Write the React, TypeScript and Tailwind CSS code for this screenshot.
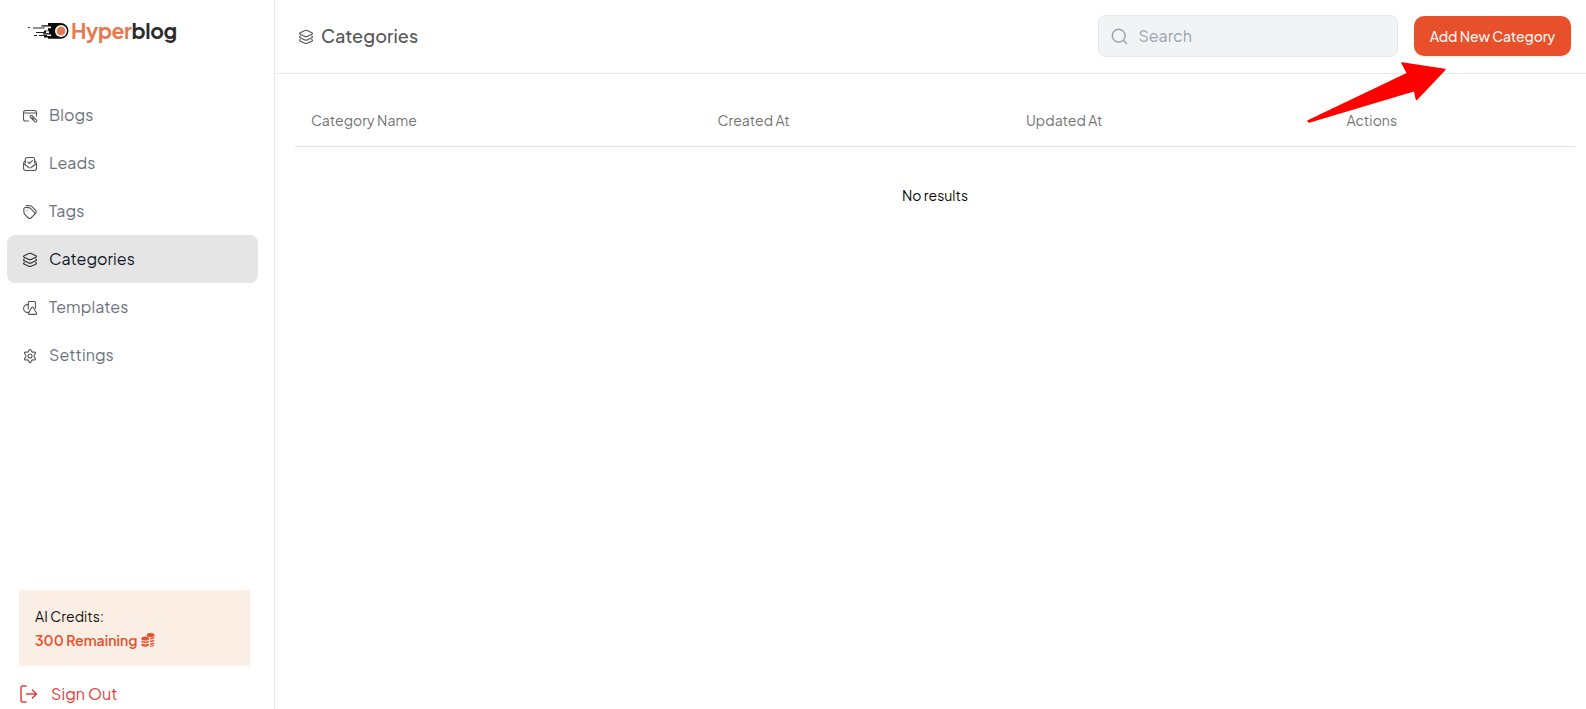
import type { ReactNode } from "react";

function Icon({ children }: { children: ReactNode }) {
  return (
    <svg
      viewBox="0 0 16 16"
      fill="none"
      stroke="currentColor"
      strokeWidth="1.1"
      strokeLinecap="round"
      strokeLinejoin="round"
      className="mt-px size-4 shrink-0"
    >
      {children}
    </svg>
  );
}

const BlogIcon = () => (
  <Icon>
    <path d="M6.5 13H3.600A2.100 2.100 0 0 1 1.500 10.900V4.600A2.100 2.100 0 0 1 3.600 2.500h8.800a2.100 2.100 0 0 1 2.100 2.100V8M1.500 5h13" />
    <path d="M8.200 7.700l2-.1 4.200 4.300a1.200 1.200 0 0 1-1.700 1.700L8.400 9.400zM10.200 9.700l1.600 1.600" />
  </Icon>
);

const LeadIcon = () => (
  <Icon>
    <path d="M3.400 7V3.500a2 2 0 0 1 2-2h5.200a2 2 0 0 1 2 2V7" />
    <path d="M3.400 4.700C2 5.400 1.500 6.500 1.500 8v4a2.500 2.500 0 0 0 2.500 2.500h8a2.500 2.500 0 0 0 2.500-2.500V8c0-1.500-.5-2.600-1.900-3.300M1.600 7.500l4.800 3.800a2.500 2.500 0 0 0 3.200 0l4.800-3.800" />
    <path d="m5.900 6 1.500 1.500L10.400 4.700" />
  </Icon>
);

const TagIcon = () => (
  <Icon>
    <path d="M1.800 5.300 2 8.900a2 2 0 0 0 .6 1.300l3.700 3.800a1.900 1.900 0 0 0 2.700 0l3.200-3.200a1.900 1.900 0 0 0 0-2.700L8.100 4.200a2 2 0 0 0-1.300-.6L3.300 3.500A1.500 1.500 0 0 0 1.800 5.300z" />
    <path d="M4.200 1.600l4.200.2a2 2 0 0 1 1.300.6l4 4a1.900 1.900 0 0 1 0 2.700l-.8.800M5 6.500h.1" />
  </Icon>
);

const LayersIcon = () => (
  <Icon>
    <path d="M6.900 1.500 2.200 3.700c-.9.500-.9 1 0 1.500l4.700 2.200a2.500 2.500 0 0 0 2.200 0l4.700-2.200c.9-.5.9-1 0-1.500L9.100 1.500a2.500 2.500 0 0 0-2.200 0z" />
    <path d="M2.300 7c-1.100.6-1.100 1.200 0 1.700l4.600 2.200a2.500 2.500 0 0 0 2.200 0l4.600-2.200c1.100-.5 1.100-1.100 0-1.700" />
    <path d="M2.300 10.500c-1.100.6-1.100 1.200 0 1.700l4.600 2.100a2.500 2.500 0 0 0 2.200 0l4.600-2.100c1.100-.5 1.100-1.100 0-1.700" />
  </Icon>
);

const TemplateIcon = () => (
  <Icon>
    <path d="M6.300 9V2.500c0-.7.400-1 1-1h5.200c.6 0 1 .4 1 1v5.800" />
    <path d="M6.300 4.600H5.500a3.900 3.900 0 0 0 0 7.800h1.200" />
    <path d="M9.500 7.700 6.600 12.900c-.4.900 0 1.500.8 1.500h6.300c.9 0 1.200-.6.800-1.400L11.400 7.700c-.5-.8-1.400-.8-1.900 0z" />
  </Icon>
);

const SettingsIcon = () => (
  <Icon>
    <circle cx="8" cy="8" r="2" />
    <path d="M6.500 3.200 7.200 1.800c.3-.5 1.300-.5 1.600 0l.7 1.400c.3.600.9.900 1.500.9l1.600-.1c.7 0 1.200.8.800 1.400l-.9 1.300a2.200 2.200 0 0 0 0 2.600l.9 1.300c.4.600-.1 1.400-.8 1.400L11 11.900c-.6 0-1.200.3-1.500.9l-.7 1.400c-.3.500-1.300.5-1.600 0l-.7-1.400c-.3-.6-.9-.9-1.500-.9l-1.600.1c-.7 0-1.200-.8-.8-1.400l.9-1.300a2.200 2.200 0 0 0 0-2.600l-.9-1.300C2.200 4.800 2.700 4 3.400 4L5 4.100c.6 0 1.200-.3 1.500-.9z" />
  </Icon>
);

const CoinsIcon = () => (
  <svg viewBox="0 0 14 14" fill="currentColor" className="size-3.5">
    <ellipse cx="9.600" cy="2" rx="3.900" ry="2" />
    <ellipse cx="4.200" cy="5.500" rx="3.900" ry="2" />
    <path d="M.4 7.700c1.500 1.100 6.100 1.100 7.600 0v1.100c-.7 1.700-6.900 1.700-7.600 0zM.4 10.600c1.500 1.100 6.100 1.100 7.600 0v1.500c-.7 2.200-6.900 2.200-7.600 0zM9.100 4.800c1.500 0 3.100-.3 4.200-1v1.200c-.4.900-2.200 1.300-4.200 1.300zM9.100 7.600c1.500 0 3.100-.3 4.200-1v1.200c-.4.900-2.200 1.300-4.200 1.300zM9.100 10.300c1.500 0 3.100-.3 4.200-1v1.200c-.4.900-2.200 1.300-4.200 1.300zM9.100 12.700c1.500 0 3.100-.3 4.200-1v.8c-.4.900-2.200 1.300-4.200 1.300z" />
  </svg>
);

function Logo() {
  return (
    <div className="flex h-[62px] items-center pl-7">
      <svg viewBox="0 0 42 18" className="h-[18px] w-[42px]">
        <path
          d="M20 1H32.500a7.800 7.800 0 0 1 0 15.800H20v-1.300h-4v-1.500h7v-1.400H15v-1.300h6V10h-5V8.400h4V6.200h3V4.500H13.500V3.200H20z"
          fill="#0b0b0b"
        />
        <path d="M5 6h12M8 10.500h10M6 13.500h3M11 13.500h8M0 5.600h2" stroke="#222" strokeWidth="1" />
        <path d="M16 6.500h4M18 9.300h3" stroke="#fff" strokeWidth="1" />
        <circle cx="33" cy="9" r="6" fill="#fff" />
        <circle cx="33" cy="9" r="4.400" fill="#e57a50" />
      </svg>
      <span className="ml-px text-[21px] leading-[26px] font-bold tracking-[-0.4px] text-[#2b2b2b]">
        <span className="text-[#e57a50]">Hyper</span>blog
      </span>
    </div>
  );
}

const navItems = [
  { label: "Blogs", icon: <BlogIcon /> },
  { label: "Leads", icon: <LeadIcon /> },
  { label: "Tags", icon: <TagIcon /> },
  { label: "Categories", icon: <LayersIcon />, active: true },
  { label: "Templates", icon: <TemplateIcon /> },
  { label: "Settings", icon: <SettingsIcon /> },
];

function Sidebar() {
  return (
    <aside className="flex w-[275px] shrink-0 flex-col border-r border-[#e5e7eb]">
      <Logo />
      <nav className="mt-[29px] flex flex-col pr-4 pl-[7px]">
        {navItems.map((item) => (
          <a
            key={item.label}
            className={
              item.active
                ? "flex h-12 items-center gap-[11px] rounded-lg bg-[#e5e5e5] pl-[15px] text-[#111827]"
                : "flex h-12 items-center gap-[11px] rounded-lg pl-[15px] text-[#6b7280]"
            }
          >
            <span className={item.active ? "text-[#333]" : "text-[#555]"}>{item.icon}</span>
            <span className="text-base tracking-[0.08px]">{item.label}</span>
          </a>
        ))}
      </nav>
      <div className="mt-auto mr-6 ml-[19px] h-[76px] bg-[#fbeee5] px-4 pt-[14px] text-sm leading-6 tracking-[0.05px]">
        <p className="text-[#111]">AI Credits:</p>
        <p className="flex items-center gap-1 font-semibold text-[#e84f2b]">
          300 Remaining <CoinsIcon />
        </p>
      </div>
      <a className="mt-4 mb-[3px] flex h-6 items-center pl-5 text-base tracking-[0.08px] text-[#e53e3e]">
        <svg
          viewBox="0 0 18 18"
          fill="none"
          stroke="currentColor"
          strokeWidth="1.500"
          strokeLinecap="round"
          strokeLinejoin="round"
          className="mr-[13px] size-[18px]"
        >
          <path d="M6 1H3a2 2 0 0 0-2 2v12a2 2 0 0 0 2 2h3M6.500 9h10M12.500 5l4 4-4 4" />
        </svg>
        Sign Out
      </a>
    </aside>
  );
}

function Header() {
  return (
    <header className="flex h-[74px] shrink-0 items-center border-b border-[#e5e7eb] pr-[15px] pb-px pl-[23px]">
      <span className="text-[#555]">
        <LayersIcon />
      </span>
      <h1 className="ml-[7px] text-lg font-medium tracking-[0.08px] text-[#555]">Categories</h1>
      <div className="ml-auto flex h-[42px] w-[300px] items-center rounded-lg border border-[#e5e7eb] bg-[#f2f3f5] pl-[11.500px] text-base text-[#9ca3af]">
        <svg
          viewBox="0 0 17 17"
          fill="none"
          stroke="currentColor"
          strokeWidth="1.500"
          strokeLinecap="round"
          className="mr-[11px] size-[17px]"
        >
          <circle cx="7.700" cy="7.700" r="6.400" />
          <path d="m12.500 12.500 3 3" />
        </svg>
        Search
      </div>
      <button className="ml-4 h-10 w-[157px] rounded-[10px] bg-[#e84f2b] text-sm font-medium tracking-[-0.08px] text-[#fff5ee] shadow-[0_1px_2px_#fbe9df]">
        Add New Category
      </button>
    </header>
  );
}

function CategoriesTable() {
  return (
    <section className="mt-[25px] mr-[11px] ml-5 text-sm">
      <div className="grid h-12 grid-cols-[406.500px_308.500px_320.500px_1fr] items-center border-b border-[#e2e2e2] pb-[6px] pl-4 tracking-[0.06px] text-[#737373]">
        <span>Category Name</span>
        <span>Created At</span>
        <span>Updated At</span>
        <span>Actions</span>
      </div>
      <p className="flex h-24 items-center justify-center text-[#0a0a0a]">No results</p>
    </section>
  );
}

export default function App() {
  return (
    <div className="relative flex h-[709px] w-full overflow-hidden bg-white font-['Plus_Jakarta_Sans','Inter',sans-serif]">
      <Sidebar />
      <main className="flex min-w-0 flex-1 flex-col">
        <Header />
        <CategoriesTable />
      </main>
      <svg viewBox="0 0 140 64" className="absolute top-[60px] left-[1306px] h-16 w-[140px]">
        <path
          d="M2 61 101.500 13.500 96 3 139 9.500 110.500 39.500 108.500 30.500 3 62z"
          fill="#f00"
          stroke="#f00"
          strokeWidth="1.500"
          strokeLinejoin="round"
        />
      </svg>
    </div>
  );
}
